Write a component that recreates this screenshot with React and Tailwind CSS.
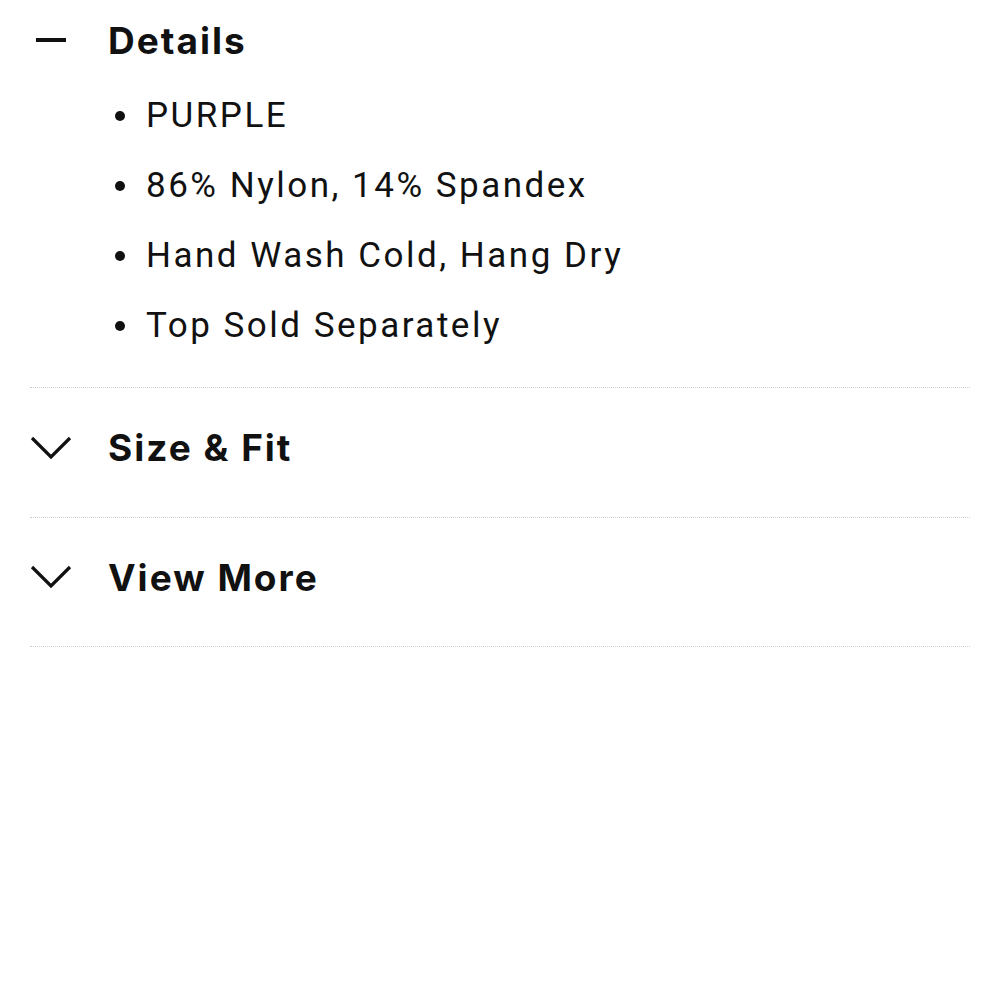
import React from "react";

function Minus() {
  return <span className="block w-[30px] h-[4px] bg-[#111]" />;
}

function Chevron() {
  return (
    <svg width="42" height="24" viewBox="0 0 42 24" fill="none" className="block">
      <path d="M2 2 L21 21 L40 2" stroke="#111" strokeWidth="3.2" strokeLinecap="butt" strokeLinejoin="miter" />
    </svg>
  );
}

const items = ["PURPLE", "86% Nylon, 14% Spandex", "Hand Wash Cold, Hang Dry", "Top Sold Separately"];

function Heading({ children }) {
  return (
    <span className="font-['Inter',sans-serif] font-bold text-[37px] tracking-[2px] text-[#111] leading-none">
      {children}
    </span>
  );
}

export default function App() {
  return (
    <div className="w-[1000px] h-[1000px] bg-white px-[30px]">
      <section className="border-b border-dotted border-[#cfcfcf]">
        <div className="h-[80px] flex items-center">
          <div className="w-[78px] flex items-center pl-[6px]">
            <Minus />
          </div>
          <Heading>Details</Heading>
        </div>
        <ul className="pb-[27px] pl-[85px]">
          {items.map((t) => (
            <li key={t} className="h-[70px] flex items-center font-['Roboto',sans-serif] text-[35px] tracking-[2.5px] text-[#111] pt-[2px]">
              <span className="w-[10px] h-[10px] rounded-full bg-[#111] mr-[21px] shrink-0" />
              {t}
            </li>
          ))}
        </ul>
      </section>
      <section className="border-b border-dotted border-[#cfcfcf]">
        <div className="h-[129px] pb-[10px] flex items-center">
          <div className="w-[78px] flex items-center">
            <Chevron />
          </div>
          <Heading>Size &amp; Fit</Heading>
        </div>
      </section>
      <section className="border-b border-dotted border-[#cfcfcf]">
        <div className="h-[128px] pb-[10px] flex items-center">
          <div className="w-[78px] flex items-center">
            <Chevron />
          </div>
          <Heading>View More</Heading>
        </div>
      </section>
    </div>
  );
}
